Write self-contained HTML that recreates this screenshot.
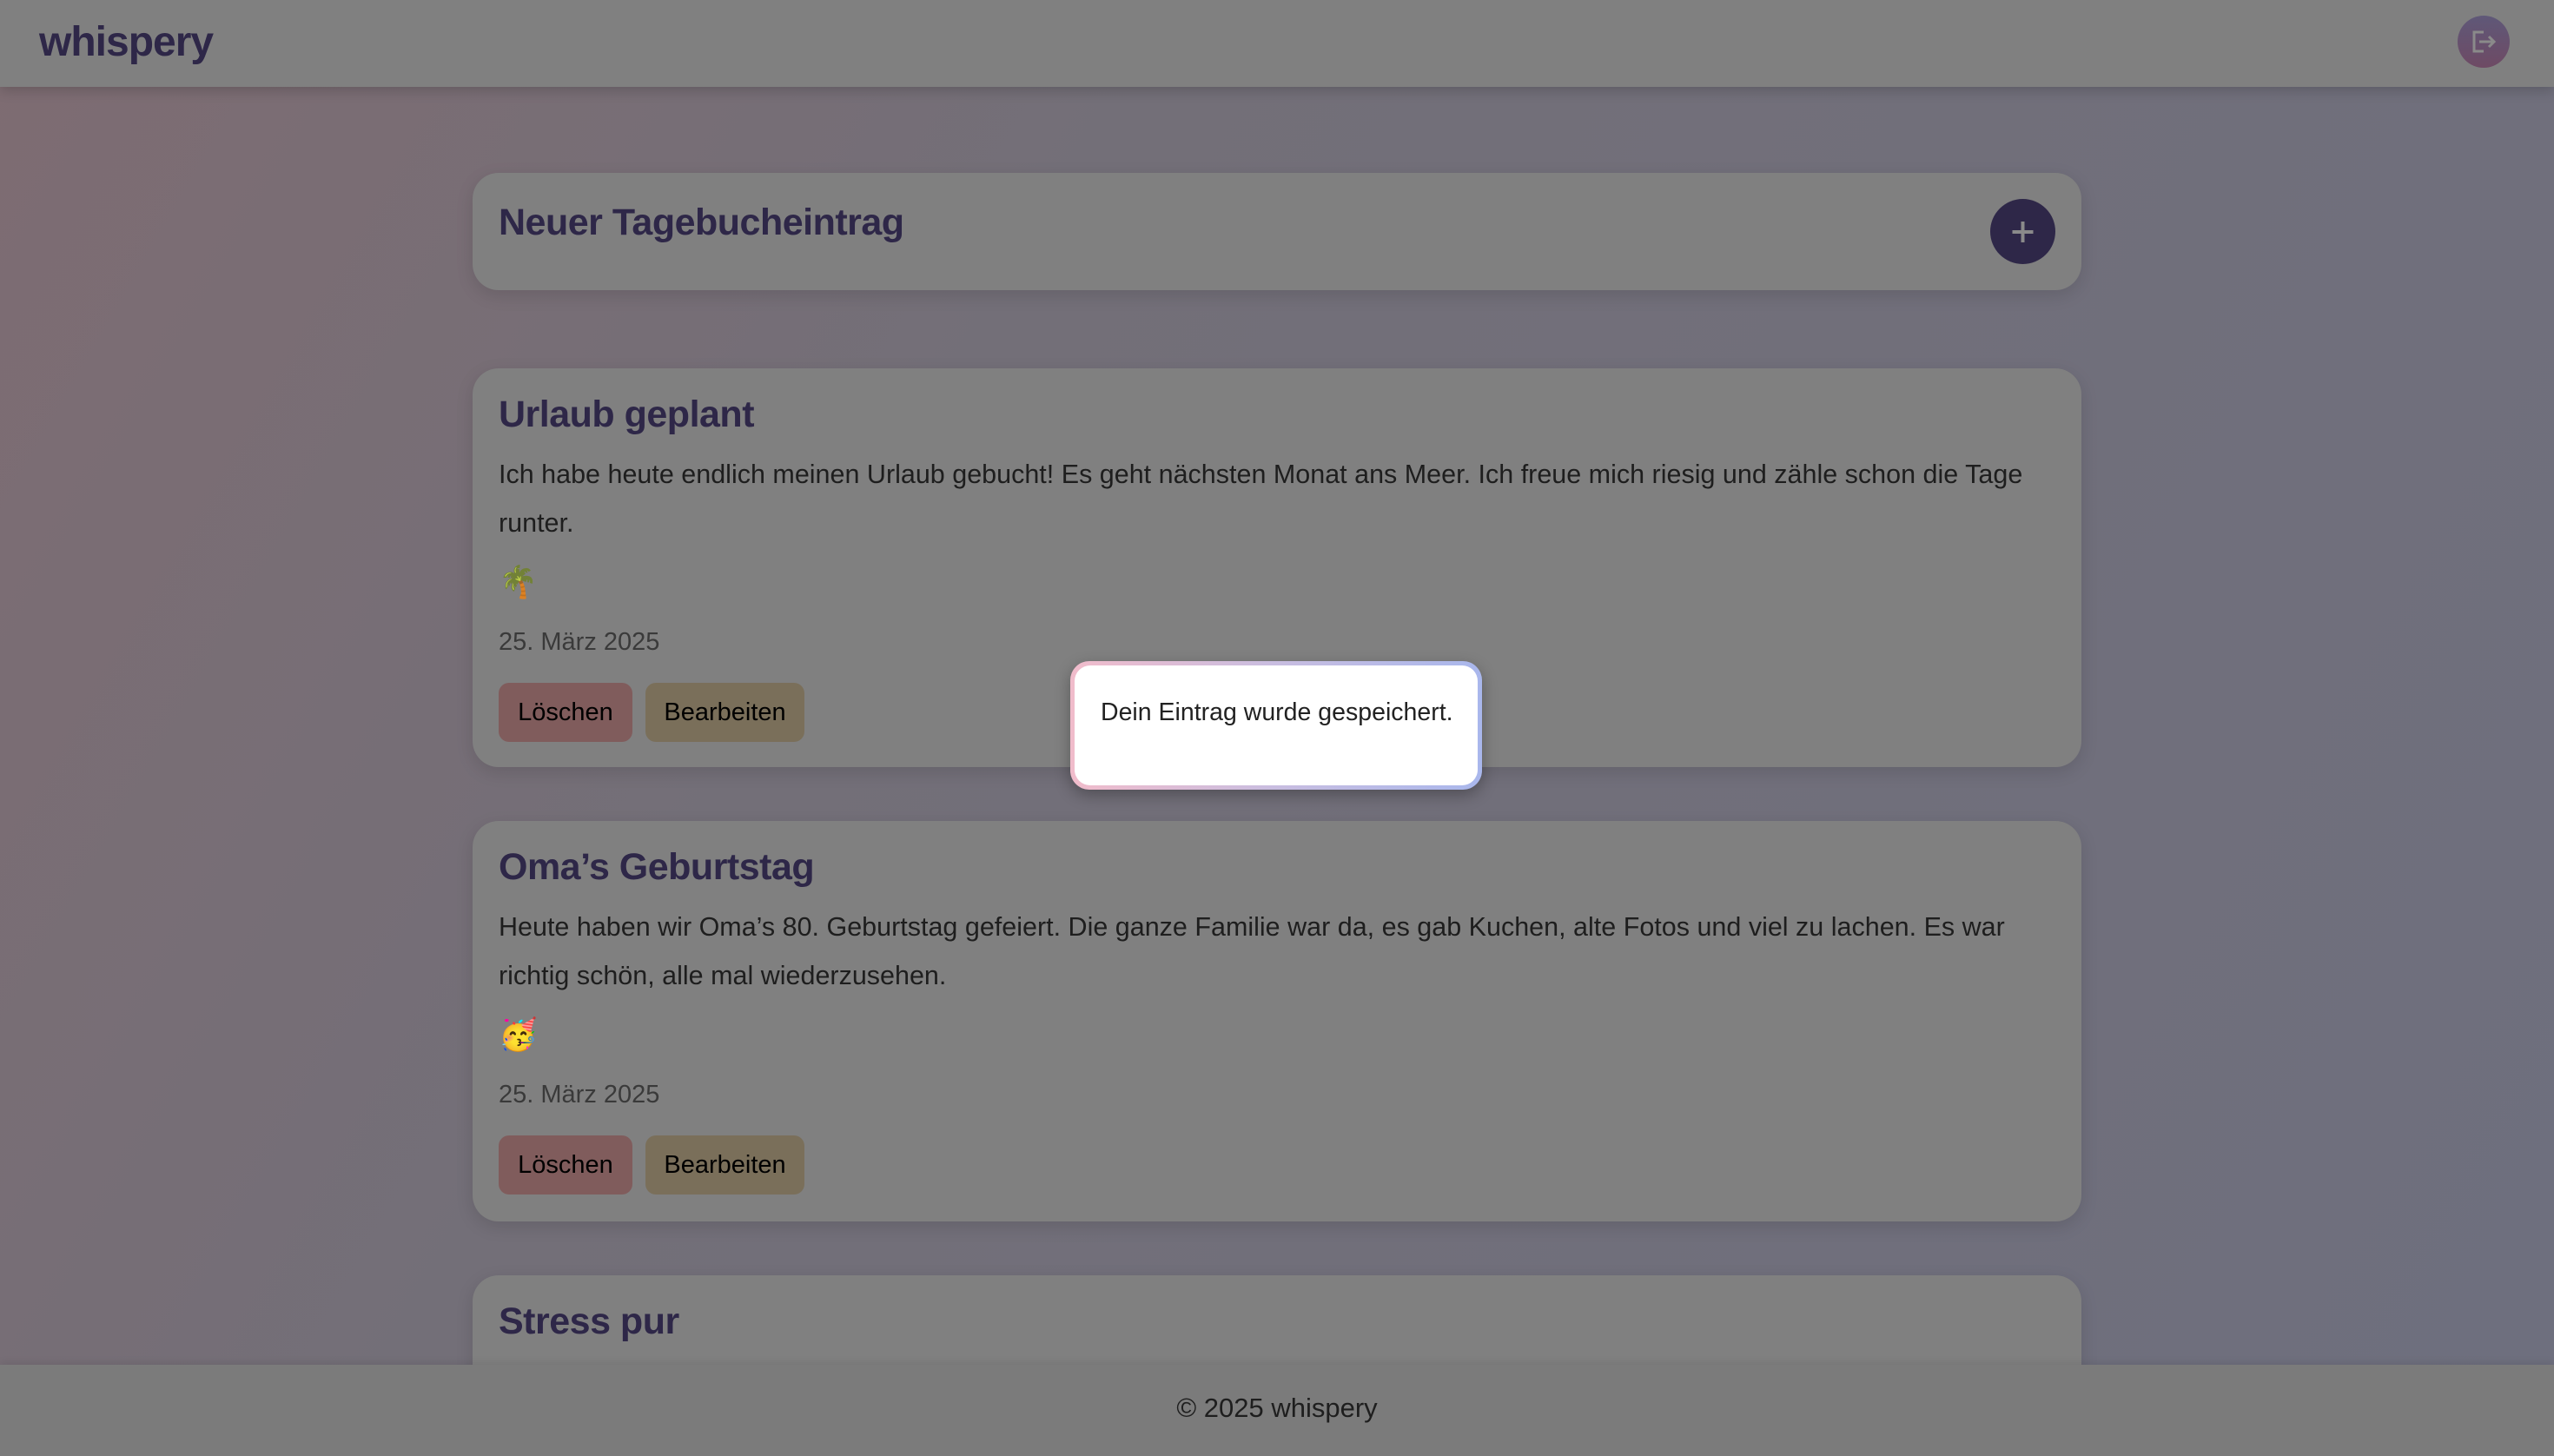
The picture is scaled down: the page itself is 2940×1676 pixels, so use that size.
<!DOCTYPE html>
<html><head><meta charset="utf-8"><style>
*{margin:0;padding:0;box-sizing:border-box}
html,body{width:2940px;height:1676px;overflow:hidden}
body{font-family:"Liberation Sans",sans-serif;background:linear-gradient(120deg,#7e6c72 0%,#736f78 35%,#6e6f7e 100%);position:relative}
.hdr{position:absolute;left:0;top:0;width:2940px;height:100px;background:#808080;box-shadow:0 4px 14px rgba(0,0,0,.18)}
.logo{position:absolute;left:45px;top:21px;font-size:48px;font-weight:bold;color:#2e2748;letter-spacing:-1px}
.out{position:absolute;left:2829px;top:18px;width:60px;height:60px;border-radius:50%;background:linear-gradient(#5f5878,#6e4a64)}
.card{position:absolute;left:544px;width:1852px;background:#808080;border-radius:30px;box-shadow:0 6px 20px rgba(0,0,0,.12);padding:0 30px}
h2{font-size:43px;font-weight:bold;color:#2e2748;position:absolute;left:30px;letter-spacing:-0.5px}
.txt{position:absolute;left:30px;right:30px;font-size:30.5px;line-height:56px;color:#1e1e1e}
.emo{position:absolute;left:30px;font-size:36px}
.date{position:absolute;left:30px;font-size:29px;color:#3a3a3a}
.btn{position:absolute;height:68px;border-radius:12px;font-size:29px;color:#000;text-align:center;line-height:68px}
.del{left:30px;width:154px;background:#805c5c}
.edit{left:199px;width:183px;background:#7a6f5a}
.plus{position:absolute;right:30px;top:30px;width:75px;height:75px;border-radius:50%;background:#2e2748}
.ftr{position:absolute;left:0;top:1571px;width:2940px;height:105px;background:#7b7b7b;text-align:center;font-size:31px;color:#1e1e1e;line-height:100px;box-shadow:0 -3px 8px rgba(0,0,0,.08)}
.modal{position:absolute;left:1232px;top:761px;width:474px;height:148px;border-radius:22px;padding:5px;background:linear-gradient(90deg,#f1bccb,#c8bde0,#a9b7ec);box-shadow:0 6px 18px rgba(0,0,0,.3)}
.modal div{width:100%;height:100%;background:#fff;border-radius:18px;font-size:28.5px;color:#222;padding:38px 0 0 30px}
</style></head><body>
<div class="hdr"><div class="logo">whispery</div>
<div class="out"><svg width="60" height="60" viewBox="0 0 60 60"><path d="M30 19H19v22h11M25 30h16M36 24l6 6-6 6" fill="none" stroke="#8a8a8a" stroke-width="3"/></svg></div></div>

<div class="card" style="top:199px;height:135px"><h2 style="top:33px">Neuer Tagebucheintrag</h2>
<div class="plus"><svg width="75" height="75" viewBox="0 0 75 75"><path d="M37.5 26v24M25.5 38h24" stroke="#8a8a8a" stroke-width="4"/></svg></div></div>

<div class="card" style="top:424px;height:459px"><h2 style="top:29px">Urlaub geplant</h2>
<div class="txt" style="top:94px">Ich habe heute endlich meinen Urlaub gebucht! Es geht nächsten Monat ans Meer. Ich freue mich riesig und zähle schon die Tage runter.</div>
<div class="emo" style="top:225px">🌴</div>
<div class="date" style="top:299px">25. März 2025</div>
<div class="btn del" style="top:362px">Löschen</div><div class="btn edit" style="top:362px">Bearbeiten</div></div>

<div class="card" style="top:945px;height:461px"><h2 style="top:29px">Oma’s Geburtstag</h2>
<div class="txt" style="top:94px">Heute haben wir Oma’s 80. Geburtstag gefeiert. Die ganze Familie war da, es gab Kuchen, alte Fotos und viel zu lachen. Es war richtig schön, alle mal wiederzusehen.</div>
<div class="emo" style="top:225px">🥳</div>
<div class="date" style="top:299px">25. März 2025</div>
<div class="btn del" style="top:362px">Löschen</div><div class="btn edit" style="top:362px">Bearbeiten</div></div>

<div class="card" style="top:1468px;height:200px"><h2 style="top:29px">Stress pur</h2></div>

<div class="ftr">© 2025 whispery</div>
<div class="modal"><div>Dein Eintrag wurde gespeichert.</div></div>
</body></html>
